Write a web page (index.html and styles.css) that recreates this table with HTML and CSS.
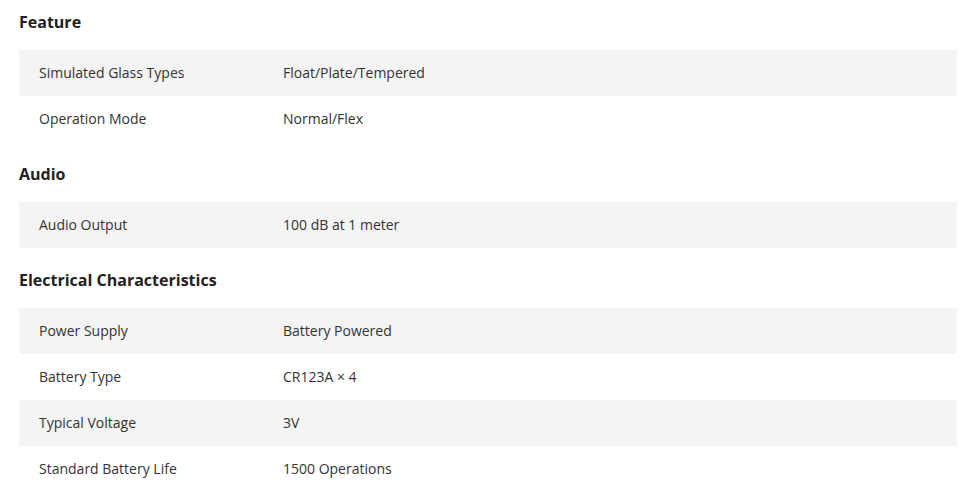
FILE: index.html
```html
<!DOCTYPE html>
<html>
<head>
<meta charset="utf-8">
<link rel="stylesheet" href="styles.css">
</head>
<body>
<div class="specs">
  <section class="group">
    <h3 class="group-title">Feature</h3>
    <div class="row"><div class="label">Simulated Glass Types</div><div class="value">Float/Plate/Tempered</div></div>
    <div class="row"><div class="label">Operation Mode</div><div class="value">Normal/Flex</div></div>
  </section>
  <section class="group">
    <h3 class="group-title">Audio</h3>
    <div class="row"><div class="label">Audio Output</div><div class="value">100 dB at 1 meter</div></div>
  </section>
  <section class="group">
    <h3 class="group-title">Electrical Characteristics</h3>
    <div class="row"><div class="label">Power Supply</div><div class="value">Battery Powered</div></div>
    <div class="row"><div class="label">Battery Type</div><div class="value">CR123A × 4</div></div>
    <div class="row"><div class="label">Typical Voltage</div><div class="value">3V</div></div>
    <div class="row"><div class="label">Standard Battery Life</div><div class="value">1500 Operations</div></div>
  </section>
</div>
</body>
</html>
```
FILE: styles.css
```css
html, body {
  margin: 0;
  padding: 0;
  background: #fff;
}
body {
  font-family: "Open Sans", "Noto Sans", sans-serif;
  color: #333;
}
.specs {
  padding: 10px 19px 0 19px;
}
.group-title {
  margin: 20px 0 16px 0;
  font-size: 16px;
  line-height: 24px;
  font-weight: 700;
  color: #222;
}
.group:first-child .group-title {
  margin-top: 0;
}
.row {
  display: grid;
  grid-template-columns: 264px 1fr;
  align-items: center;
  height: 46px;
  font-size: 14px;
  line-height: 20px;
}
.row:nth-of-type(odd) {
  background: #f4f4f4;
}
.label {
  padding-left: 20px;
}
```
